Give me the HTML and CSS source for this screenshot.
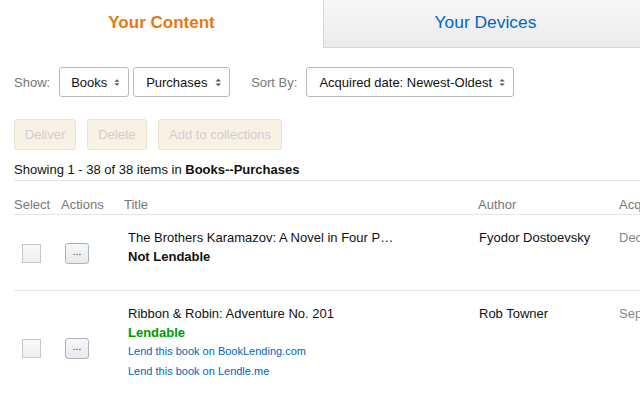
FILE: index.html
```html
<!DOCTYPE html>
<html>
<head>
<meta charset="utf-8">
<link rel="stylesheet" href="styles.css">
</head>
<body>
<div class="tabs">
  <div class="tab tab-active">Your Content</div>
  <div class="tab tab-other">Your Devices</div>
</div>
<div class="page">
  <div class="filters">
    <span class="lbl">Show:</span>
    <div class="sel sel-books">Books<svg class="arr" width="7" height="9" viewBox="0 0 7 9"><path d="M0.5 3.5 L3.5 0.5 L6.5 3.5 Z M0.5 5.5 L3.5 8.5 L6.5 5.5 Z" fill="#555"/></svg></div>
    <div class="sel sel-purch">Purchases<svg class="arr" width="7" height="9" viewBox="0 0 7 9"><path d="M0.5 3.5 L3.5 0.5 L6.5 3.5 Z M0.5 5.5 L3.5 8.5 L6.5 5.5 Z" fill="#555"/></svg></div>
    <span class="lbl lbl-sort">Sort By:</span>
    <div class="sel sel-sort">Acquired date: Newest-Oldest<svg class="arr" width="7" height="9" viewBox="0 0 7 9"><path d="M0.5 3.5 L3.5 0.5 L6.5 3.5 Z M0.5 5.5 L3.5 8.5 L6.5 5.5 Z" fill="#555"/></svg></div>
  </div>
  <div class="actions">
    <div class="btn btn-deliver">Deliver</div>
    <div class="btn btn-delete">Delete</div>
    <div class="btn btn-add">Add to collections</div>
  </div>
  <div class="showing">Showing 1 - 38 of 38 items in <b>Books--Purchases</b></div>
  <div class="grid head">
    <div>Select</div>
    <div>Actions</div>
    <div>Title</div>
    <div>Author</div>
    <div>Acquired</div>
  </div>
  <div class="grid row">
    <div class="c-sel"><span class="chk"></span></div>
    <div class="c-act"><span class="dots">...</span></div>
    <div class="c-title">
      <div>The Brothers Karamazov: A Novel in Four P…</div>
      <div class="notlend">Not Lendable</div>
    </div>
    <div class="c-author">Fyodor Dostoevsky</div>
    <div class="c-date">December 2, 2013</div>
  </div>
  <div class="grid row">
    <div class="c-sel"><span class="chk"></span></div>
    <div class="c-act"><span class="dots">...</span></div>
    <div class="c-title">
      <div>Ribbon &amp; Robin: Adventure No. 201</div>
      <div class="lend">Lendable</div>
      <div class="link">Lend this book on BookLending.com</div>
      <div class="link">Lend this book on Lendle.me</div>
    </div>
    <div class="c-author">Rob Towner</div>
    <div class="c-date">September 7, 2013</div>
  </div>
</div>
</body>
</html>
```
FILE: styles.css
```css
html, body {
  margin: 0;
  padding: 0;
  background: #fff;
  overflow: hidden;
}
body {
  font-family: "Liberation Sans", Arial, sans-serif;
  font-size: 13px;
  color: #111;
  width: 640px;
}
.tabs {
  display: flex;
  height: 48px;
}
.tab {
  display: flex;
  align-items: center;
  justify-content: center;
  font-size: 17px;
  padding-bottom: 2px;
  box-sizing: border-box;
}
.tab-active {
  width: 323px;
  color: #e47911;
  font-weight: bold;
}
.tab-other {
  flex: 1;
  color: #0066c0;
  font-size: 17.4px;
  padding-left: 7px;
  background: linear-gradient(#f7f7f7, #ebebeb);
  border-left: 1px solid #d8d8d8;
  border-bottom: 1px solid #d8d8d8;
}
.page {
  padding-left: 14px;
  width: 700px;
}
.filters {
  display: flex;
  align-items: center;
  margin-top: 19px;
  height: 30px;
}
.lbl {
  color: #777;
  margin-right: 9px;
}
.lbl-sort {
  margin-left: 17px;
}
.sel {
  display: flex;
  align-items: center;
  white-space: nowrap;
  height: 30px;
  box-sizing: border-box;
  border: 1px solid #b9b9b9;
  border-radius: 3px;
  padding: 0 8px 0 11px;
  margin-right: 4px;
  color: #111;
  background: #fff;
}
.arr {
  margin-left: 7px;
}
.sel-books { width: 70px; }
.sel-purch { width: 97px; padding-left: 12px; }
.sel-sort { width: 208px; padding-left: 12px; }
.actions {
  display: flex;
  gap: 11px;
  margin-top: 22px;
  height: 31px;
}
.btn {
  display: flex;
  align-items: center;
  justify-content: center;
  box-sizing: border-box;
  height: 31px;
  border: 1px solid #ede4cf;
  border-radius: 3px;
  background: #f8f2e4;
  color: #cfcfcf;
}
.btn-deliver { width: 62px; }
.btn-delete { width: 60px; }
.btn-add { width: 124px; }
.showing {
  margin-top: 10px;
  line-height: 20px;
  height: 20px;
  border-bottom: 1px solid #e5e5e5;
}
.grid {
  display: grid;
  grid-template-columns: 47px 63px 354px 141px 1fr;
  white-space: nowrap;
}
.head {
  color: #777;
  padding-top: 14px;
  line-height: 20px;
  height: 19px;
  border-bottom: 1px solid #e5e5e5;
}
.row {
  padding: 13px 0 24px;
  line-height: 19px;
  border-bottom: 1px solid #e5e5e5;
}
.c-sel, .c-act {
  display: flex;
  align-items: center;
  margin-top: -13px;
  margin-bottom: -24px;
  padding-top: 1px;
}
.c-sel { padding-left: 8px; }
.c-act { padding-left: 4px; }
.chk {
  display: block;
  width: 19px;
  height: 19px;
  box-sizing: border-box;
  border: 1px solid #c6c6c6;
  background: linear-gradient(#f9f9f9, #efefef);
}
.dots {
  display: flex;
  align-items: center;
  justify-content: center;
  width: 24px;
  height: 21px;
  box-sizing: border-box;
  border: 1px solid #adb1b8;
  border-radius: 3px;
  background: linear-gradient(#f7f8fa, #e7e9ec);
  font-size: 10px;
  line-height: 10px;
  padding-bottom: 3px;
  color: #333;
}
.c-title { padding-left: 4px; }
.c-author { padding-left: 1px; }
.c-date { color: #888; }
.notlend { font-weight: bold; }
.lend { font-weight: bold; color: #009a00; }
.link {
  color: #0066c0;
  font-size: 11px;
  line-height: 19.5px;
}
```
